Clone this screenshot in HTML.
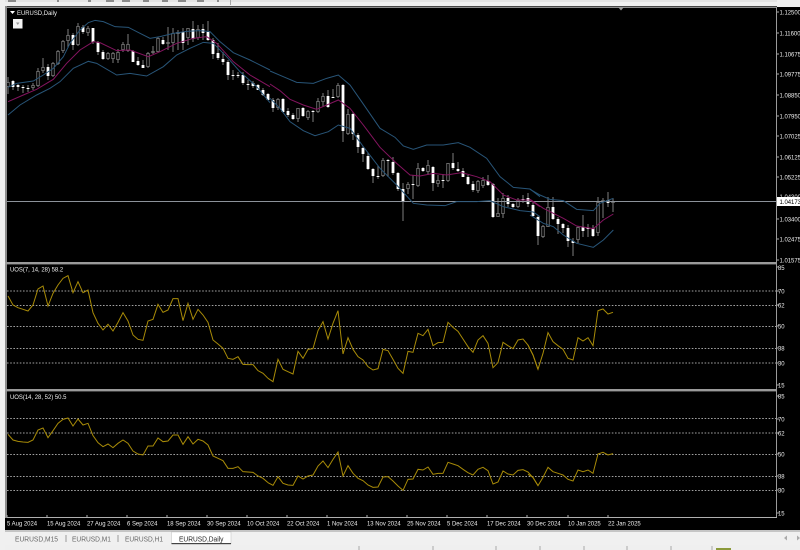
<!DOCTYPE html>
<html><head><meta charset="utf-8"><title>EURUSD,Daily</title>
<style>
html,body{margin:0;padding:0;background:#f0f0f0;width:800px;height:550px;overflow:hidden}
svg{display:block;filter:blur(.3px)}
text{font-family:"Liberation Sans",sans-serif;font-size:5.95px;fill:#eee}
.t{font-size:7.5px;fill:#666}
.s{font-size:7px;fill:#333}
</style></head><body>
<svg width="800" height="550" viewBox="0 0 800 550" xmlns="http://www.w3.org/2000/svg">
<rect width="800" height="550" fill="#f0f0f0"/>
<rect x="0" y="0" width="800" height="2" fill="#e4e4e4"/>
<path d="M8 0h8v2h-8zM57 0h2v2h-2zM88 0h3v2h-3zM106 0h8v2h-8zM122 0h8v2h-8zM143 0h6v2h-6zM162 0h6v2h-6zM178 0h8v2h-8zM197 0h7v2h-7zM217 0h2v2h-2z" fill="#8a8a8a"/>
<rect x="230" y="0" width="1" height="5" fill="#aaa"/>
<rect x="5" y="6" width="795" height="524" fill="#000"/>
<rect x="5" y="6" width="2" height="512" fill="#8d8d8d"/>
<rect x="5" y="6.5" width="772" height="1.5" fill="#8d8d8d"/>
<rect x="776" y="7" width="1" height="511" fill="#9a9a9a"/>
<rect x="0" y="0" width="5" height="550" fill="#f0f0f0"/>
<rect x="777" y="0" width="23" height="7" fill="#f0f0f0"/>
<path d="M618 7h6l-3 3.5z" fill="#999"/>

<!-- candles -->
<path fill="none" stroke="#8c8c8c" stroke-width="0.9" d="M8 77V94M13 80V90M18 84V91M23 85V93M28 85V92M33 83V90M38 68V87M43 58V73M48 64V80M53 62V77M58 50V65M63 40V53M68 29V48M73 33V50M78 23V46M83 25V34M88 26V36M93 28V44M98 41V55M103 50V60M108 52V60M113 52V63M118 49V63M123 42V52M128 34V52M133 50V62M138 57V66M143 60V68M148 52V68M153 46V54M158 37V52M163 37V45M168 27V50M173 28V52M178 30V50M183 28V50M188 28V45M193 21V42M198 25V40M203 24V40M208 21V41M213 38V59M218 43V60M223 52V65M228 60V80M233 70V80M238 72V78M243 72V85M248 80V90M253 81V88M258 84V90M263 88V96M268 93V100M273 98V112M278 98V110M283 98V113M288 108V117M293 113V120M298 108V122M303 107V117M308 110V120M313 110V122M318 98V113M323 93V107M328 90V108M333 89V98M338 83V98M343 84V142M348 109V135M353 112V140M358 133V153M363 146V162M368 153V170M373 168V183M378 166V179M383 158V177M388 159V177M393 157V175M398 172V191M403 183V221M408 182V194M413 175V199M418 163V187M423 167V172M428 160V175M433 166V191M438 175V187M443 174V188M448 163V182M453 153V170M458 162V172M463 168V177M468 175V185M473 181V192M478 180V193M483 177V188M488 175V186M493 183V218M498 198V217M503 193V218M508 195V207M513 203V208M518 198V208M523 195V203M528 193V207M533 202V217M538 215V245M543 225V238M548 197V227M553 197V220M558 217V234M563 223V233M568 225V247M573 238V256M578 226V243M583 215V237M588 224V237M593 225V237M598 197V236M603 198V218M608 192V207M613 198V212"/>
<path fill="none" stroke="#858585" stroke-width="3.2" d="M8 82V87M33 85V88M38 71V86M43 67V71M53 63V76M58 51V64M63 41V51M68 35V41M78 26V45M88 28V33M108 53V59M113 53V59M118 52V60M123 44V50M128 44V51M148 53V67M153 51V53M158 38V52M168 42V44M173 33V43M178 32V34M188 28V38M198 29V38M278 99V108M298 108V119M308 111V118M318 101V112M323 96V102M338 85V97M348 114V134M383 160V176M408 184V189M418 168V186M428 165V172M438 180V184M448 163V181M478 181V191M483 180V186M498 213V217M503 198V214M518 200V207M543 226V237M548 207V227M578 227V240M598 202V233M603 200V202M613 201V203"/>
<path fill="none" stroke="#000" stroke-width="1.7" d="M8 82.8V86.2M33 85.8V87.2M38 71.8V85.2M43 67.8V70.2M53 63.8V75.2M58 51.8V63.2M63 41.8V50.2M68 35.8V40.2M78 26.8V44.2M88 28.8V32.2M108 53.8V58.2M113 53.8V58.2M118 52.8V59.2M123 44.8V49.2M128 44.8V50.2M148 53.8V66.2M153 51.8V52.2M158 38.8V51.2M168 42.8V43.2M173 33.8V42.2M178 32.8V33.2M188 28.8V37.2M198 29.8V37.2M278 99.8V107.2M298 108.8V118.2M308 111.8V117.2M318 101.8V111.2M323 96.8V101.2M338 85.8V96.2M348 114.8V133.2M383 160.8V175.2M408 184.8V188.2M418 168.8V185.2M428 165.8V171.2M438 180.8V183.2M448 163.8V180.2M478 181.8V190.2M483 180.8V185.2M498 213.8V216.2M503 198.8V213.2M518 200.8V206.2M543 226.8V236.2M548 207.8V226.2M578 227.8V239.2M598 202.8V232.2M603 200.8V201.2M613 201.8V202.2"/>
<path fill="none" stroke="#fff" stroke-width="2.8" d="M13 81V87M18 85V87M23 87V88M28 88V89M48 67V76M73 35V45M83 27V32M93 28V42M98 42V52M103 52V59M133 51V62M138 61V65M143 65V68M163 40V44M183 32V43M193 29V39M203 29V33M208 32V40M213 40V54M218 53V58M223 59V62M228 62V75M233 75V76M238 75V76M243 75V83M248 84V85M253 83V86M258 85V90M263 90V95M268 94V100M273 100V108M283 99V112M288 111V115M293 115V119M303 108V116M313 111V112M328 96V107M333 97V98M343 85V131M353 114V134M358 135V147M363 148V154M368 156V169M373 169V176M378 176V177M388 160V161M393 162V173M398 173V189M403 189V202M413 184V185M423 168V171M433 167V183M443 180V181M453 163V168M458 169V171M463 171V177M468 177V184M473 184V190M488 181V185M493 184V217M508 198V204M513 204V207M523 199V200M528 198V204M533 205V216M538 217V236M553 207V219M558 219V224M563 224V228M568 228V241M573 241V243M583 227V231M588 228V229M593 228V236M608 200V203"/>

<!-- price line -->
<path d="M7 201.5H776" stroke="#8c929a" stroke-width="1"/>

<!-- Bollinger bands (3x zoom coordinates) -->
<g fill="none" stroke-width="3">
<g transform="scale(.3333333)">
<polyline stroke="#285578" points="24,262 50,250 100,243 130,225 160,205 190,170 210,130 240,90 265,68 285,61 310,65 345,80 385,82 420,100 450,115 480,110 520,100 560,94 600,92 630,95 660,125 700,158 750,180 810,210"/>
<polyline stroke="#285578" points="24,345 60,315 110,285 150,265 180,245 220,205 265,184 290,190 350,225 390,220 440,228 490,200 530,165 570,145 610,127 640,130 680,170 720,215 770,260 810,308"/>
<polyline stroke="#84145f" points="24,305 70,285 110,268 160,238 200,190 240,150 280,125 300,128 350,152 390,150 445,170 480,155 530,130 580,115 620,110 650,130 700,185 750,225 810,260"/>
</g>
<g transform="translate(270,60) scale(.3333333)">
<polyline stroke="#285578" points="0,33 40,50 80,67 130,70 170,55 205,45 240,75 275,125 330,205 375,232 400,258 430,268 470,255 520,255 565,248 600,262 650,295 690,350 730,382 780,387 810,410"/>
<polyline stroke="#285578" points="0,115 30,145 60,185 100,212 135,227 175,215 205,195 240,205 280,260 330,325 380,375 430,430 470,435 525,437 560,425 620,425 660,422 700,440 750,452 790,456 810,470"/>
<polyline stroke="#84145f" points="0,72 30,92 60,118 100,135 140,148 205,120 240,145 280,195 330,262 380,310 420,345 450,348 490,340 530,345 575,338 620,350 660,365 700,405 740,420 780,420 810,440"/>
</g>
<g transform="translate(530,140) scale(.3333333)">
<polyline stroke="#285578" points="0,148 30,165 60,178 100,182 140,208 190,212 210,190 250,175"/>
<polyline stroke="#285578" points="0,225 40,250 70,260 100,285 140,310 190,322 220,300 250,270"/>
<polyline stroke="#84145f" points="0,178 40,205 70,220 100,235 140,258 190,266 220,240 250,222"/>
</g>
</g>

<!-- panel dividers -->
<rect x="5" y="262" width="772" height="2.4" fill="#9a9a9a"/>
<rect x="5" y="389" width="772" height="2.4" fill="#9a9a9a"/>

<!-- UOS dotted levels -->
<path d="M7 291H776M7 305.5H776M7 326.5H776M7 348.5H776M7 363H776M7 418.5H776M7 433H776M7 454.5H776M7 476.5H776M7 490.5H776" stroke="#a0a0a0" stroke-width="1" stroke-dasharray="1.6 1.6" fill="none"/>

<!-- UOS lines -->
<g fill="none" stroke="#a88b08" stroke-width="3">
<g transform="translate(0,260) scale(.3333333)">
<polyline points="24,108 39,135 54,143 69,148 84,153 99,135 114,87 129,78 144,138 159,100 174,75 189,55 204,47 219,98 234,65 249,98 264,90 279,158 294,190 309,210 324,193 339,213 354,187 369,158 384,183 399,225 414,238 429,241 444,183 459,178 474,133 489,157 504,150 519,116 534,116 549,182 564,130 579,178 594,148 609,165 624,187 639,240 654,252 669,265 684,295 699,298 714,290 729,313 744,314 759,314 774,332 789,340 804,355"/>
</g>
<g transform="translate(270,260) scale(.3333333)">
<polyline points="-6,355 9,365 24,298 39,328 54,335 69,342 84,274 99,295 114,268 129,266 144,212 159,185 174,237 189,190 204,152 219,282 234,233 249,268 264,290 279,300 294,320 309,330 324,326 339,268 354,272 369,298 384,325 399,340 414,274 429,277 444,220 459,227 474,208 489,257 504,248 519,247 534,187 549,202 564,214 579,237 594,260 609,277 624,240 639,227 654,250 669,323 684,308 699,247 714,257 729,266 744,240 759,237 774,255 789,285 804,328"/>
</g>
<g transform="translate(530,260) scale(.3333333)">
<polyline points="-6,255 9,285 24,328 39,280 54,218 69,245 84,257 99,268 114,295 129,300 144,233 159,243 174,233 189,257 204,152 219,147 234,162 249,157"/>
</g>
<g transform="translate(0,390) scale(.3333333)">
<polyline points="24,133 39,150 54,154 69,156 84,157 99,150 114,120 129,114 144,143 159,122 174,100 189,88 204,84 219,108 234,87 249,105 264,100 279,137 294,158 309,170 324,162 339,173 354,160 369,150 384,160 399,183 414,192 429,195 444,168 459,168 474,144 489,155 504,153 519,135 534,135 549,163 564,140 579,162 594,148 609,153 624,165 639,198 654,205 669,212 684,235 699,235 714,230 729,245 744,246 759,247 774,258 789,265 804,278"/>
</g>
<g transform="translate(270,390) scale(.3333333)">
<polyline points="-6,278 9,286 24,260 39,280 54,285 69,286 84,258 99,267 114,258 129,255 144,228 159,213 174,233 189,208 204,186 219,258 234,227 249,250 264,265 279,272 294,285 309,292 324,291 339,261 354,260 369,273 384,288 399,301 414,268 429,267 444,238 459,240 474,231 489,253 504,250 519,250 534,217 549,222 564,227 579,238 594,248 609,255 624,238 639,232 654,242 669,282 684,276 699,243 714,252 729,255 744,241 759,239 774,246 789,263 804,287"/>
</g>
<g transform="translate(530,390) scale(.3333333)">
<polyline points="-6,253 9,262 24,287 39,262 54,232 69,245 84,250 99,255 114,268 129,273 144,240 159,245 174,240 189,250 204,192 219,187 234,195 249,191"/>
</g>
</g>

<!-- time axis -->
<rect x="7" y="517" width="770" height="1" fill="#b0b0b0"/>
<path d="M7 517v-2M47 517v-2M87 517v-2M127 517v-2M167 517v-2M207 517v-2M247 517v-2M287 517v-2M327 517v-2M367 517v-2M407 517v-2M447 517v-2M487 517v-2M527 517v-2M568 517v-2M608 517v-2" stroke="#b0b0b0" stroke-width="1" fill="none"/>
<text x="7" y="525.5">5 Aug 2024</text>
<text x="47" y="525.5">15 Aug 2024</text>
<text x="87" y="525.5">27 Aug 2024</text>
<text x="127" y="525.5">6 Sep 2024</text>
<text x="167" y="525.5">18 Sep 2024</text>
<text x="207" y="525.5">30 Sep 2024</text>
<text x="247" y="525.5">10 Oct 2024</text>
<text x="287" y="525.5">22 Oct 2024</text>
<text x="327" y="525.5">1 Nov 2024</text>
<text x="367" y="525.5">13 Nov 2024</text>
<text x="407" y="525.5">25 Nov 2024</text>
<text x="447" y="525.5">5 Dec 2024</text>
<text x="487" y="525.5">17 Dec 2024</text>
<text x="527" y="525.5">30 Dec 2024</text>
<text x="568" y="525.5">10 Jan 2025</text>
<text x="608" y="525.5">22 Jan 2025</text>

<!-- price axis -->
<path d="M777 12h2M777 33h2M777 54h2M777 74h2M777 95h2M777 116h2M777 136h2M777 157h2M777 177h2M777 219h2M777 239h2M777 260h2M777 267h2M777 291h2M777 305h2M777 326h2M777 348h2M777 363h2M777 385h2M777 396h2M777 419h2M777 433h2M777 454h2M777 476h2M777 490h2M777 513h2" stroke="#aaa" stroke-width="1"/>
<g>
<text x="779.5" y="14.5">1.12500</text>
<text x="779.5" y="35.5">1.11600</text>
<text x="779.5" y="56.5">1.10675</text>
<text x="779.5" y="76.5">1.09775</text>
<text x="779.5" y="97.5">1.08850</text>
<text x="779.5" y="118.5">1.07950</text>
<text x="779.5" y="138.5">1.07025</text>
<text x="779.5" y="159.5">1.06125</text>
<text x="779.5" y="179.5">1.05225</text>
<text x="779.5" y="199">1.04300</text>
<text x="779.5" y="221.5">1.03400</text>
<text x="779.5" y="241.5">1.02475</text>
<text x="779.5" y="262.5">1.01575</text>
</g>
<rect x="777" y="197" width="23" height="9" fill="#fff"/>
<text x="779.5" y="204" style="fill:#000">1.04173</text>

<text x="778" y="270">85</text>
<text x="778" y="293.5">70</text>
<text x="778" y="307.5">62</text>
<text x="778" y="328.5">50</text>
<text x="778" y="350.5">38</text>
<text x="778" y="365.5">30</text>
<text x="778" y="387.5">15</text>
<text x="778" y="398.5">85</text>
<text x="778" y="421.5">70</text>
<text x="778" y="435.5">62</text>
<text x="778" y="456.5">50</text>
<text x="778" y="478.5">38</text>
<text x="778" y="492.5">30</text>
<text x="778" y="515.5">15</text>

<!-- labels -->
<path d="M10 11h5l-2.5 3z" fill="#fff"/>
<text x="17" y="15">EURUSD,Daily</text>
<rect x="13" y="19" width="9.5" height="9.5" fill="#f4f4f4"/>
<path d="M16 22.5h3.5l-1.75 2.5z" fill="#999"/>
<text x="10" y="271.5">UOS(7, 14, 28) 58.2</text>
<text x="10" y="399">UOS(14, 28, 52) 50.5</text>

<!-- tab bar -->
<rect x="0" y="530" width="800" height="20" fill="#f0f0f0"/>
<rect x="5" y="530.5" width="795" height="1" fill="#9a9a9a"/>
<rect x="171.5" y="532" width="59.5" height="12" fill="#fff"/>
<path d="M171.5 544V532H231V544" fill="none" stroke="#c8c8c8" stroke-width=".6"/>
<rect x="171.5" y="543" width="59.5" height="1.2" fill="#444"/>
<path d="M66 535v7M118 535v7" stroke="#9a9a9a" stroke-width="1"/>
<text class="t" x="15" y="541.5" textLength="43" lengthAdjust="spacingAndGlyphs">EURUSD,M15</text>
<text class="t" x="72" y="541.5" textLength="39" lengthAdjust="spacingAndGlyphs">EURUSD,M1</text>
<text class="t" x="125" y="541.5" textLength="38" lengthAdjust="spacingAndGlyphs">EURUSD,H1</text>
<text class="t" x="179" y="541.5" textLength="44.5" lengthAdjust="spacingAndGlyphs" style="fill:#222">EURUSD,Daily</text>
<path d="M787 535.5v5l-3-2.5zM797 535.5v5l3-2.5z" fill="#aaa"/>

<!-- status bar -->
<rect x="5" y="544.5" width="795" height="5.5" fill="#efefef"/>
<path d="M359 546v4M433 546v4M496 546v4M540 546v4M584 546v4M627 546v4M671 546v4M712 546v4" stroke="#a8a8a8" stroke-width="1"/>
<text class="s" x="8" y="555">For Help, press F1</text>
<text class="s" x="112" y="555">Default</text>
<text class="s" x="365" y="555">I</text>
<text class="s" x="436" y="555">2024.11.29 00:00</text>
<text class="s" x="500" y="555">O: 1.05510</text>
<text class="s" x="544" y="555">H: 1.05560</text>
<text class="s" x="588" y="555">L: 1.05480</text>
<text class="s" x="631" y="555">C: 1.05530</text>
<text class="s" x="675" y="555">V: 13610</text>
<rect x="716" y="548" width="15" height="2" fill="#8b9a3a"/>
<text class="s" x="733" y="555">1478/4 kb</text>
</svg>
</body></html>
